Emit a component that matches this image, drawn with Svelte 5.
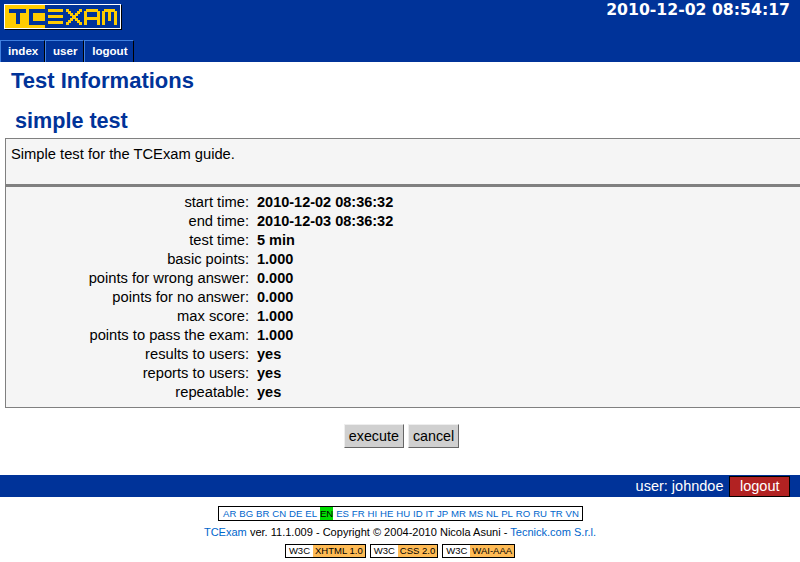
<script>
    const infoRows = [
        ["start time:", "2010-12-02 08:36:32"],
        ["end time:", "2010-12-03 08:36:32"],
        ["test time:", "5 min"],
        ["basic points:", "1.000"],
        ["points for wrong answer:", "0.000"],
        ["points for no answer:", "0.000"],
        ["max score:", "1.000"],
        ["points to pass the exam:", "1.000"],
        ["results to users:", "yes"],
        ["reports to users:", "yes"],
        ["repeatable:", "yes"],
    ];
    const menuItems = ["index", "user", "logout"];
    const langs = "AR BG BR CN DE EL EN ES FR HI HE HU ID IT JP MR MS NL PL RO RU TR VN".split(" ");
    const badges = ["XHTML 1.0", "CSS 2.0", "WAI-AAA"];
</script>

<div class="header">
    <div class="top">
        <svg class="logo" width="118" height="26" viewBox="0 0 118 26" shape-rendering="crispEdges">
            <rect x="1" y="1" width="117" height="25" fill="#000" />
            <rect x="0.5" y="0.5" width="116" height="24" fill="#003399" stroke="#fff" />
            <rect x="1" y="1" width="40" height="23" fill="#ffcc00" />
            <g fill="#003399">
                <path d="M5 5H22V9H16V20H12V9H5Z" />
                <path d="M25 5H41V9H29V17H41V21H25Z" />
            </g>
            <g fill="#ffcc00">
                <path d="M44 5H59V8H44ZM44 11H59V14H44ZM44 17H59V20H44Z" />
                <path d="M62 5H65V7H67V9H69V11H71V9H73V7H75V5H78V8H76V10H74V12H72V14H74V16H76V18H78V21H75V19H73V17H71V15H69V17H67V19H65V21H62V18H64V16H66V14H68V12H66V10H64V8H62Z" />
                <path d="M80 21V7H82V5H94V7H96V21H93V16H83V21ZM83 8V13H93V8Z" />
                <path d="M98 21V7H100V5H111V7H113V21H110V8H107V17H104V8H101V21Z" />
            </g>
        </svg>
        <div class="clock">2010-12-02 08:54:17</div>
    </div>
    <ul class="menu">
        {#each menuItems as item}
            <li>{item}</li>
        {/each}
    </ul>
</div>

<div class="body">
    <h1>Test Informations</h1>
    <h2>simple test</h2>
    <div class="box description">Simple test for the TCExam guide.</div>
    <div class="box details">
        {#each infoRows as [label, value]}
            <div class="row">
                <span class="label">{label}</span>
                <span class="value">{value}</span>
            </div>
        {/each}
    </div>
    <div class="buttons">
        <button>execute</button>
        <button>cancel</button>
    </div>
</div>

<div class="userbar">
    <span>user: johndoe</span>
    <span class="logout">logout</span>
</div>

<div class="footer">
    <div class="langs">
        {#each langs as lang}
            <span class:active={lang === "EN"}>{lang}</span>
        {/each}
    </div>
    <div class="copyright">
        <span class="link">TCExam</span> ver. 11.1.009 - Copyright © 2004-2010 Nicola Asuni - <span class="link">Tecnick.com S.r.l.</span>
    </div>
    <div class="badges">
        {#each badges as name}
            <span class="badge"><span class="w3c">W3C</span><span class="std">{name}</span></span>
        {/each}
    </div>
</div>

<style>
    :global(body) {
        background: #fff;
        color: #000;
        font-family: "Liberation Sans", Arial, sans-serif;
    }

    .header {
        background: #003399;
        height: 62px;
        display: flex;
        flex-direction: column;
        justify-content: space-between;
    }

    .top {
        display: flex;
        justify-content: space-between;
        padding: 4px 4px 0 4px;
    }

    .logo {
        display: block;
    }

    .clock {
        color: #fff;
        font-family: "DejaVu Sans", sans-serif;
        font-weight: 700;
        font-size: 15.7px;
        line-height: 18px;
        margin-top: -3px;
        margin-right: 6px;
    }

    .menu {
        list-style: none;
        margin: 0;
        padding: 0;
        display: flex;
    }

    .menu li {
        color: #fff;
        font-size: 11.6px;
        font-weight: 700;
        line-height: 20px;
        padding: 0 5.7px 0 7px;
        border-top: 1px solid #3f7fdf;
        border-left: 1px solid #3f7fdf;
        border-right: 1px solid #000;
        height: 21px;
    }

    .body {
        height: 413px;
        overflow: hidden;
    }

    h1 {
        color: #003399;
        font-size: 22px;
        line-height: 24px;
        margin: 7px 0 0 11px;
    }

    h2 {
        color: #003399;
        font-size: 21.6px;
        line-height: 24px;
        margin: 16px 0 0 15px;
    }

    .box {
        background: #f5f5f5;
        border: 1px solid #808080;
        border-right: none;
        margin-left: 5px;
        font-size: 14.72px;
    }

    .description {
        margin-top: 5px;
        height: 47px;
        padding: 6px 5px;
        box-sizing: border-box;
        line-height: 18px;
    }

    .details {
        border-top-width: 2px;
        padding: 6px 0 5px;
    }

    .row {
        display: grid;
        grid-template-columns: 243px 1fr;
        column-gap: 8px;
        height: 19px;
        line-height: 19px;
    }

    .label {
        text-align: right;
    }

    .value {
        font-weight: 700;
        font-size: 14.5px;
    }

    .buttons {
        display: flex;
        justify-content: center;
        gap: 4px;
        margin: 16px 0 0 3px;
    }

    button {
        font-family: inherit;
        font-size: 14.3px;
        color: #000;
        background: #d0d0d0;
        border: 1px solid;
        border-color: #eee #666 #666 #eee;
        padding: 0 4px;
        height: 24px;
    }

    .userbar {
        background: #003399;
        color: #fff;
        height: 22px;
        display: flex;
        justify-content: flex-end;
        align-items: center;
        gap: 6px;
        padding-right: 10px;
        font-size: 14.5px;
    }

    .logout {
        background: #b22222;
        border: 1px solid #000;
        padding: 0 9.5px;
        line-height: 19px;
    }

    .footer {
        text-align: center;
        font-size: 11.04px;
    }

    .langs {
        display: inline-flex;
        gap: 2.9px;
        border: 1px solid #000;
        padding: 0 3px 0 4px;
        margin: 9px 0 0 1px;
        font-size: 9.6px;
        line-height: 13px;
        color: #0066cc;
    }

    .langs .active {
        background: #00dd00;
        color: #000;
    }

    .copyright {
        margin-top: 3px;
        line-height: 16px;
    }

    .link {
        color: #0066cc;
    }

    .badges {
        display: flex;
        justify-content: center;
        gap: 4px;
        margin-top: 4px;
        font-size: 9.5px;
        line-height: 12px;
    }

    .badge {
        display: flex;
        border: 1px solid #000;
    }

    .w3c {
        padding: 0 3px;
    }

    .std {
        background: #ffbb55;
        padding: 0 2px;
    }
</style>
